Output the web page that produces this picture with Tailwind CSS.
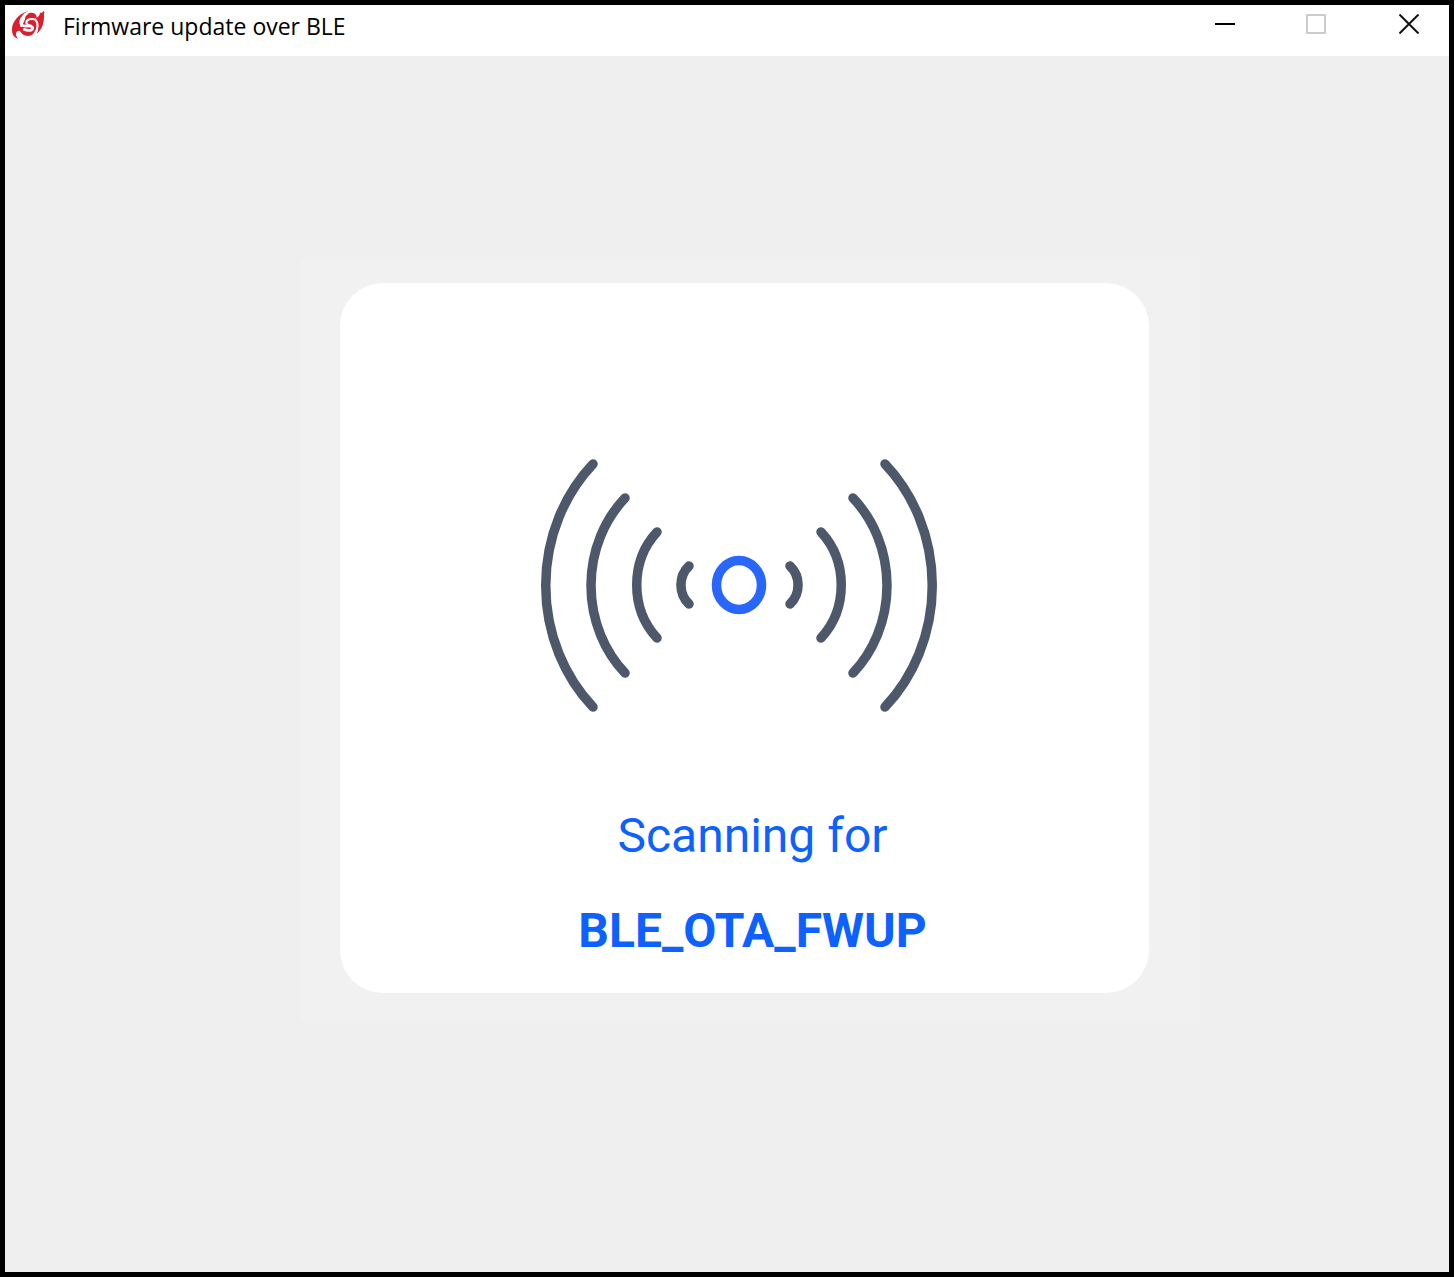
<!DOCTYPE html>
<html lang="en">
<head>
<meta charset="utf-8">
<meta name="viewport" content="width=device-width, initial-scale=1">
<title>Firmware update over BLE</title>
<script src="https://cdn.jsdelivr.net/npm/@tailwindcss/browser@4"></script>
</head>
<body class="bg-white pr-px">
<div class="flex min-h-screen flex-col border-5 border-black bg-[#efefef]">
  <header class="flex h-[51px] items-start justify-between bg-white">
    <div class="flex items-center gap-4 pl-[6px] pt-[3px]">
      <svg class="h-9 w-9" viewBox="33 27 108 108" aria-hidden="true">
        <g fill="#dc1f2e">
          <path d="M85 37C58 43 35 68 36 93C36 108 43 116 54 119C47 111 46 102 52 97C57 93 60 96 64 101C70 110 84 113 94 109C103 105 107 97 105 88L62 84C57 70 66 50 85 37Z"/>
          <path d="M76 62C73 48 84 41 95 41C106 42 111 48 110 56C116 54 120 48 120 40L123 43L132 37C134 68 128 91 110 105C115 94 116 84 112 74L100 66Z"/>
          <path d="M76 58H110V94H66V82Z"/>
        </g>
        <path d="M82 42C68 50 58 66 64 77C69 86 96 76 98 86C99 95 86 97 70 90" fill="none" stroke="#fff" stroke-width="8"/>
        <path d="M108 62C94 57 79 61 79 71C80 78 88 79 96 81M104 60C116 71 116 90 102 107" fill="none" stroke="#fff" stroke-width="6"/>
        <path d="M129 37L132 39L130 43" fill="none" stroke="#555" stroke-width="2"/>
      </svg>
      <h1 class="font-['Open_Sans'] text-[23px] leading-9 text-black">Firmware update over BLE</h1>
    </div>
    <div class="flex">
      <button type="button" aria-label="Minimize" class="flex h-[38px] w-[92px] items-center justify-center">
        <svg class="h-5 w-5" viewBox="0 0 20 20" aria-hidden="true"><path d="M0 10H20" stroke="#000" stroke-width="2"/></svg>
      </button>
      <button type="button" aria-label="Maximize" disabled class="flex h-[38px] w-[90px] items-center justify-center">
        <svg class="h-5 w-5" viewBox="0 0 20 20" aria-hidden="true"><path d="M1 1H19V19H1Z" fill="none" stroke="#ccc" stroke-width="2"/></svg>
      </button>
      <button type="button" aria-label="Close" class="flex h-[38px] w-[88px] items-center justify-center pl-2">
        <svg class="h-5 w-5" viewBox="0 0 20 20" aria-hidden="true"><path d="M.5.5L19.5 19.5M19.5.5L.5 19.5" stroke="#111" stroke-width="2"/></svg>
      </button>
    </div>
  </header>
  <main class="flex grow items-center justify-center pb-12 pl-[46px]">
    <section class="w-full max-w-[900px] bg-[#f1f1f1] pb-[27px] pl-10 pr-[51px] pt-[23px]">
      <div class="flex flex-col items-center rounded-[43px] bg-white pb-[15px] pt-[172px]">
        <div class="pr-[11px]">
          <svg class="h-[260px] w-[400px]" viewBox="539 455 400 260" fill="none" stroke="#4d586b" stroke-width="9.5" stroke-linecap="round" role="img" aria-label="Scanning">
            <path d="M593 464A155 169 0 0 0 593 707"/>
            <path d="M625 498A111 121.5 0 0 0 625 673"/>
            <path d="M657 532A67 74 0 0 0 657 638"/>
            <path d="M689 566A23 25 0 0 0 689 604"/>
            <path d="M885 464A155 169 0 0 1 885 707"/>
            <path d="M853 498A111 121.5 0 0 1 853 673"/>
            <path d="M821 532A67 74 0 0 1 821 638"/>
            <path d="M790 566A23 25 0 0 1 790 604"/>
            <ellipse cx="739" cy="585" rx="22.5" ry="24.5" stroke="#2966fa"/>
          </svg>
        </div>
        <p class="mt-[73px] pl-4 text-center font-['Roboto'] text-[48px] leading-[95px] text-[#0d61ff]">Scanning for<br><strong class="font-bold">BLE_OTA_FWUP</strong></p>
      </div>
    </section>
  </main>
</div>
</body>
</html>
